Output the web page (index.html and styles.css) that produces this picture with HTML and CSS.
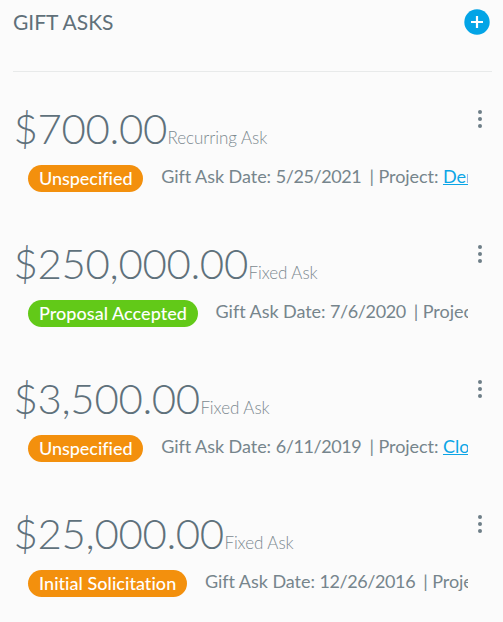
FILE: index.html
```html
<!DOCTYPE html>
<html lang="en"><head><meta charset="utf-8"><title>Gift Asks</title><link rel="stylesheet" href="styles.css"></head>
<body>
<main class="panel">
<header class="head"><h1>GIFT ASKS</h1>
<button class="add" aria-label="Add"><svg viewBox="0 0 26 26" width="26" height="26"><circle cx="13" cy="13" r="12.7" fill="#03a4e6"/><path d="M13 7v12M7 13h12" stroke="#fff" stroke-width="2.2"/></svg></button></header>
<article class="ask"><div class="top"><span class="amount">$700.00</span><span class="type">Recurring Ask</span><span class="dots"><i></i><i></i><i></i></span></div>
<div class="row"><span class="tag">Unspecified</span><span class="info">Gift Ask Date: <span class="date">5/25/2021</span><span class="project">| Project: <a>Demo</a></span></span></div></article>
<article class="ask"><div class="top"><span class="amount">$250,000.00</span><span class="type">Fixed Ask</span><span class="dots"><i></i><i></i><i></i></span></div>
<div class="row"><span class="tag wide green">Proposal Accepted</span><span class="info">Gift Ask Date: <span class="date">7/6/2020</span><span class="project">| Project:</span></span></div></article>
<article class="ask"><div class="top"><span class="amount">$3,500.00</span><span class="type">Fixed Ask</span><span class="dots"><i></i><i></i><i></i></span></div>
<div class="row"><span class="tag">Unspecified</span><span class="info">Gift Ask Date: <span class="date">6/11/2019</span><span class="project">| Project: <a>Closed</a></span></span></div></article>
<article class="ask"><div class="top"><span class="amount">$25,000.00</span><span class="type">Fixed Ask</span><span class="dots"><i></i><i></i><i></i></span></div>
<div class="row"><span class="tag wide">Initial Solicitation</span><span class="info">Gift Ask Date: <span class="date">12/26/2016</span><span class="project">| Project:</span></span></div></article>
</main></body></html>
```
FILE: styles.css
```css
* { box-sizing: border-box; }
body { margin: 0; background: #fbfbfb; font-family: Lato, sans-serif; color: #76858c; overflow: hidden; }
.panel { padding: 0 11px 0 13px; height: 622px; overflow: hidden; }
.head { height: 72px; border-bottom: 1px solid #e8eaea; display: flex; justify-content: space-between; align-items: flex-start; padding-top: 9px; margin-bottom: 28px; }
h1 { margin: -1px 0 0; font-size: 21px; line-height: 28px; font-weight: 400; color: #607079; }
.add { border: 0; background: none; padding: 0; width: 26px; height: 26px; margin-right: 2px; }
.add svg { display: block; }
.ask { height: 135px; }
.top { display: flex; align-items: baseline; height: 63px; line-height: 57px; padding-left: 0.5px; }
.amount { font-size: 42px; font-weight: 300; color: #5f717b; letter-spacing: -0.35px; }
.type { margin-left: 0.5px; font-size: 17px; font-weight: 300; color: #7c8990; letter-spacing: -0.05px; }
.dots { margin-left: auto; align-self: flex-start; padding-top: 10px; margin-right: 10px; display: grid; gap: 3px; }
.dots i { width: 4px; height: 4px; border-radius: 50%; background: #6d7e87; }
.row { display: flex; width: 455px; padding-left: 15px; overflow: hidden; white-space: nowrap; }
.tag { flex: none; height: 27px; line-height: 27px; margin-top: 2px; padding: 0 10.7px 0 11px; border-radius: 14px; background: #f3900d; color: #fff; font-size: 18px; font-weight: 500; letter-spacing: -0.04px; }
.wide { letter-spacing: 0.04px; }
.green { background: #62c918; }
.info { margin-left: 18px; font-size: 18px; line-height: 27px; letter-spacing: -0.05px; }
.date { letter-spacing: -0.4px; }
.project { margin-left: 8px; letter-spacing: -0.05px; }
.info a { color: #0ba5e6; text-decoration: underline; }
```
